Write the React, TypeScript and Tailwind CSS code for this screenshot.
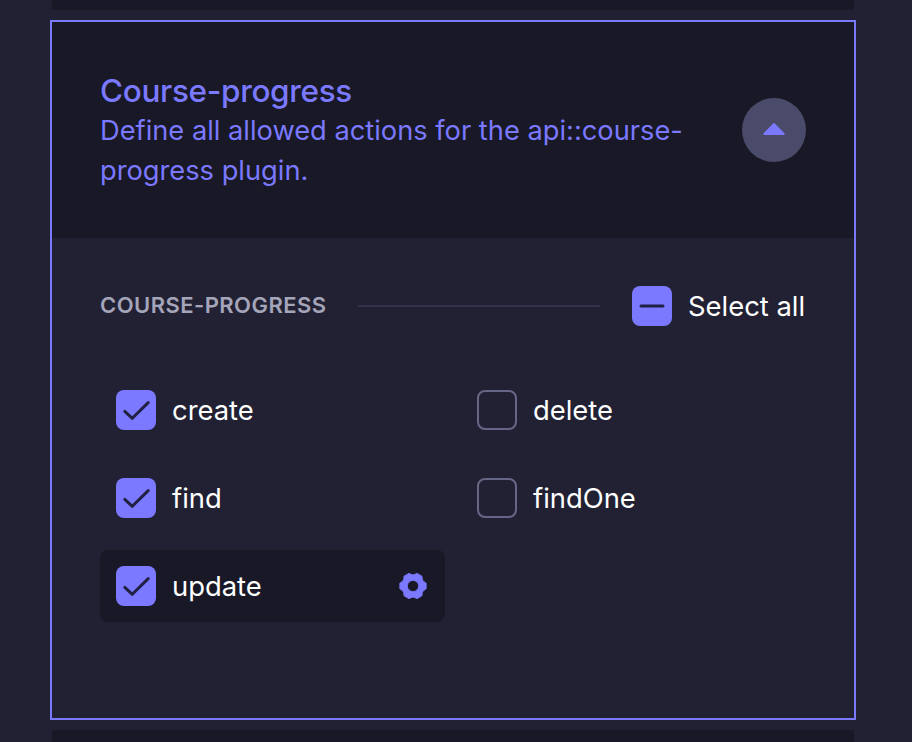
type Action = {
  name: string;
  checked: boolean;
  active?: boolean;
};

const actions: Action[] = [
  { name: "create", checked: true },
  { name: "delete", checked: false },
  { name: "find", checked: true },
  { name: "findOne", checked: false },
  { name: "update", checked: true, active: true },
];

function Checkbox({ state }: { state: "on" | "off" | "mixed" }) {
  if (state === "off") {
    return <span className="size-10 shrink-0 rounded-lg border-2 border-[#666687]" />;
  }

  return (
    <span className="size-10 shrink-0 rounded-lg bg-[#7b79ff]">
      <svg
        viewBox="0 0 40 40"
        className="size-10"
        fill="none"
        stroke="#212146"
        strokeWidth="3"
        strokeLinecap="round"
        strokeLinejoin="round"
      >
        {state === "on" ? <path d="M8.8 21.4L16.3 28.3L32.2 12.6" /> : <path d="M9 20H31" />}
      </svg>
    </span>
  );
}

function CogIcon() {
  return (
    <svg viewBox="0 0 28 28" className="size-7">
      <path
        fill="#7b79ff"
        stroke="#7b79ff"
        strokeWidth="0.8"
        strokeLinejoin="round"
        fillRule="evenodd"
        d="M10 1.3L13 2.7H15L18 1.3L23 4.2L23.4 7.5L24.4 9.2L27.2 11.2V16.8L24.4 18.8L23.4 20.5L23 23.8L18 26.7L15 25.3H13L10 26.7L5 23.8L4.6 20.5L3.6 18.8L0.8 16.8V11.2L3.6 9.2L4.6 7.5L5 4.2ZM14 8.4A5.6 5.6 0 1 0 14 19.6A5.6 5.6 0 1 0 14 8.4Z"
      />
    </svg>
  );
}

export default function App() {
  return (
    <div className="flex h-[742px] flex-col overflow-hidden bg-[#222133] pr-14 pl-[50px] font-['Inter','Liberation_Sans',sans-serif] text-[27.4px] leading-10 text-white">
      <div className="mx-0.5 h-2.5 shrink-0 rounded-b-xs bg-[#181826]" />

      <section className="mt-2.5 h-[700px] shrink-0 border-2 border-[#7b79ff]">
        <header className="flex h-[216px] items-center justify-between bg-[#181826] px-12 text-[#7b79ff]">
          <div className="w-[600px]">
            <h2 className="pt-px pb-px text-[31.5px] leading-[39px] font-medium tracking-[-0.33px]">
              Course-progress
            </h2>
            <p className="text-[27.25px]">
              Define all allowed actions for the api::course-
              <br />
              progress plugin.
            </p>
          </div>
          <button className="flex size-16 items-center justify-center rounded-full bg-[#4a4a6a] pb-0.5">
            <svg viewBox="0 0 22 12" className="h-3 w-[22px]" fill="#7b79ff">
              <path d="M10.2 0.4Q11 -0.3 11.8 0.4L21.5 10.2Q22 12 20.5 12H1.5Q0 12 0.5 10.2Z" />
            </svg>
          </button>
        </header>

        <div className="px-12 pt-12">
          <div className="flex h-10 items-center">
            <h3 className="w-[226px] pb-0.5 text-[22px] font-semibold tracking-[0.45px] whitespace-nowrap text-[#a5a5ba]">
              COURSE-PROGRESS
            </h3>
            <div className="mx-8 h-0.5 flex-1 bg-[#32324d]" />
            <div className="flex w-[174px] items-center gap-4 whitespace-nowrap">
              <Checkbox state="mixed" />
              <span>Select all</span>
            </div>
          </div>

          <div className="mt-12 grid grid-cols-2 gap-4">
            {actions.map((action) => (
              <div
                key={action.name}
                className={`flex h-[72px] items-center justify-between rounded-lg pr-[18px] pl-4 ${action.active ? "bg-[#181826]" : ""}`}
              >
                <div className="flex items-center gap-4">
                  <Checkbox state={action.checked ? "on" : "off"} />
                  <span>{action.name}</span>
                </div>
                {action.active && <CogIcon />}
              </div>
            ))}
          </div>
        </div>
      </section>

      <div className="mx-0.5 mt-2.5 h-3 shrink-0 rounded-t-xs bg-[#181826]" />
    </div>
  );
}
